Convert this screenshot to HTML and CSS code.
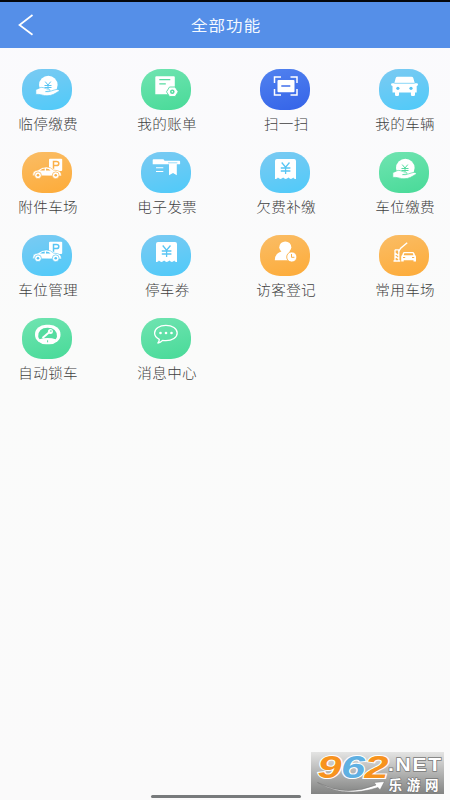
FILE: index.html
```
<!DOCTYPE html>
<html lang="zh-CN">
<head>
<meta charset="utf-8">
<title>全部功能</title>
<link rel="stylesheet" href="styles.css">
</head>
<body>
<svg class="defs" aria-hidden="true">
  <defs>
    <symbol id="hand" viewBox="0 0 50 41">
      <circle cx="26.3" cy="16" r="9.3" fill="#fff"/>
      <path d="M23.200 12.600l2.800 3.400 2.800-3.400M22.500 16.500h7M22.500 18.500h7M26 16v4" fill="none" stroke="currentColor" stroke-width="1"/>
      <path d="M13.8 20.4c2.5-.3 3.3-2 6-2 2.800 0 4.400 1.900 7.100 1.900 1.500 0 1.700 1.500.3 1.800l-3.700.5c3.500.9 8.300-1.900 11.300-2.200 2.500-.2 3.100 1 1.700 2-3.200 2.200-6.700 4.400-11.500 4.400-3.500 0-5.700-1.400-8.700-1.400h-2.500z" fill="#fff" stroke="currentColor" stroke-width=".7"/>
    </symbol>
    <symbol id="bill" viewBox="0 0 50 41">
      <path d="M15.300 7.300h17.500q1 0 1 1v17h-19.500v-17q0-1 1-1z" fill="#fff"/>
      <path d="M18.300 10.700h11M18.300 14.800h6.500" stroke="currentColor" stroke-width="1.300"/>
      <path d="M28.500 18h5.700l3 4.800-3 4.700h-5.700l-3-4.700z" fill="#fff" stroke="currentColor" stroke-width=".9" stroke-linejoin="round"/>
      <circle cx="31.300" cy="22.800" r="2.300" fill="currentColor"/><circle cx="31.300" cy="22.800" r=".8" fill="#fff"/>
    </symbol>
    <symbol id="scan" viewBox="0 0 50 41">
      <path d="M14.500 14V8h6.500M30.500 8H37v6M37 20v6h-6.500M21 26h-6.500v-6" fill="none" stroke="#fff" stroke-width="1.500"/>
      <rect x="17.500" y="11" width="17" height="12.300" rx="1" fill="#fff"/>
      <path d="M21.300 17h9" stroke="currentColor" stroke-width="1.500"/>
    </symbol>
    <symbol id="car" viewBox="0 0 50 41">
      <path d="M18.500 7.700h14q1.400 0 1.800 1.300l1.500 5.200h1.900q1.300 0 1.300 1.300t-1.300 1.400v6.500h-1.700v2.300q0 1.300-1.300 1.300h-1.500q-1.300 0-1.300-1.300v-2.300H20v2.300q0 1.300-1.300 1.300h-1.400Q16 27 16 25.700v-2.300h-2.500v-6.500Q12 16.700 12 15.500t1.500-1.300h1.800L16.700 9q.4-1.300 1.800-1.300z" fill="#fff"/>
      <path d="M15.300 14.300h20.400" stroke="currentColor" stroke-width=".7"/>
      <circle cx="18.900" cy="19.300" r="1.600" fill="currentColor"/><circle cx="32" cy="19.300" r="1.600" fill="currentColor"/>
    </symbol>
    <symbol id="parking" viewBox="0 0 50 41">
      <rect x="27" y="6.800" width="13.200" height="12.300" rx="1" fill="#fff"/>
      <path d="M31.500 16.700V9.400h3q2.300 0 2.300 2.100t-2.300 2.100h-3" fill="none" stroke="currentColor" stroke-width="1.500"/>
      <path d="M10.700 23.700q-.3-4 2.300-4.900l3.200-.9q3.700-3 8-3 4.500 0 7.300 3.200 5 .2 6.800 1.800 1.200 1.400 1 4.200z" fill="#fff" stroke="currentColor" stroke-width=".6"/>
      <path d="M18 18.400q2.300-1.700 4.700-1.800v1.800zM24 16.600q2.800.1 4.600 1.800h-4.600z" fill="currentColor"/>
      <g fill="#fff" stroke="currentColor" stroke-width=".7"><circle cx="16" cy="23.300" r="3.400"/><circle cx="33.700" cy="23.300" r="3.400"/></g>
      <g fill="currentColor"><circle cx="16" cy="23.300" r="1.300"/><circle cx="33.700" cy="23.300" r="1.300"/></g>
    </symbol>
    <symbol id="invoice" viewBox="0 0 50 41">
      <path d="M12.500 7.300h9.300q1.200 0 1.700 1.400h14.800q.8 0 .8.800v2.700H11.700V8.100q0-.8.800-.8z" fill="#fff"/>
      <path d="M28 12h7.800v11.200L32 21l-4 2.200z" fill="#fff"/>
      <path d="M15 15.700h7.300M15 19.500h7.300" stroke="#fff" stroke-width="1.100"/>
      <path d="M27 10.800h9.300" stroke="currentColor" stroke-width=".6"/>
    </symbol>
    <symbol id="receipt" viewBox="0 0 50 41">
      <path d="M17 6.900h17q2 0 2 2v18q-2.300.4-2.700-1.300-2.300 2.700-4.900 0-2.700 2.700-5.300 0-2.600 2.700-5.200 0-.7 1.700-2.900 1.300v-18q0-2 2-2z" fill="#fff"/>
      <path d="M21.700 10.500l3.900 4.700 3.900-4.700M20.800 16h9.600M20.800 19h9.600M25.600 15v7" fill="none" stroke="currentColor" stroke-width="1.300"/>
    </symbol>
    <symbol id="visitor" viewBox="0 0 50 41">
      <ellipse cx="25.300" cy="12.200" rx="6" ry="5.800" fill="#fff"/>
      <path d="M14.800 25.300q0-7.100 6.700-8.800h7.700q4 1.300 4.800 5l-3 3.800z" fill="#fff"/>
      <circle cx="31.800" cy="22" r="5.100" fill="#fff" stroke="currentColor" stroke-width=".9"/>
      <path d="M31.500 19v3.300h2.900" fill="none" stroke="currentColor" stroke-width="1"/>
    </symbol>
    <symbol id="barrier" viewBox="0 0 50 41">
      <path d="M14.500 26h6.800M16 25.800V14.800M16 14.800h3.800v11M16 18l4 3M16 21l4 3" stroke="#fff" stroke-width="1.300" fill="none"/>
      <path d="M19.700 16.500l2-3.300 6.500-5.400" fill="none" stroke="#fff" stroke-width="1.400"/>
      <path d="M25 17h9q1 0 1.500 1.500l.5 1.500q1 .6 1 2v4.500h-2.500v-1.300H24.700v1.300h-2.500V22q0-1.400 1-2l.5-1.500Q24 17 25 17z" fill="#fff"/>
      <path d="M25.300 18.200h8.500l.6 2h-9.700zM24 22h2.200v1H24zM33 22h2.200v1H33z" fill="currentColor"/>
    </symbol>
    <symbol id="lock" viewBox="0 0 50 41">
      <rect x="13" y="6.700" width="25.500" height="19.600" rx="11" ry="9.500" fill="#fff"/>
      <path d="M16.200 18.500q0-8.800 9.400-8.800t9.400 8.800q-.2 1.600-1.400 2.800-3.300-1.400-8-1.400t-8 1.400q-1.200-1.200-1.400-2.800z" fill="currentColor"/>
      <path d="M20.500 20l7-6" stroke="#fff" stroke-width="2"/>
      <circle cx="28.400" cy="13.500" r="2.500" fill="#fff"/><circle cx="28.900" cy="13.100" r=".8" fill="currentColor"/>
      <path d="M25.600 22.300v2" stroke="currentColor"/>
    </symbol>
    <symbol id="message" viewBox="0 0 50 41">
      <path d="M18.300 21.300q-4.700-2.200-4.700-6.300c0-4.500 5-7.700 11.300-7.700s11.300 3.200 11.300 7.700-5 7.700-11.300 7.700q-1.800 0-3.300-.3-2 2.200-4.700 2.600 1.500-1.700 1.400-3.700z" fill="none" stroke="#fff" stroke-width="1.300" stroke-linejoin="round"/>
      <g fill="#fff"><circle cx="19.500" cy="15" r="1.300"/><circle cx="25" cy="15" r="1.300"/><circle cx="30.500" cy="15" r="1.300"/></g>
    </symbol>
  </defs>
</svg>
<div class="screen">
  <header class="bar">
    <svg class="back" viewBox="0 0 16 22"><path d="M14.500 1L1.500 11l13 9.800" fill="none" stroke="#fff" stroke-width="1.700"/></svg>
    <h1 class="title">全部功能</h1>
  </header>
  <main class="grid">
    <div class="item"><svg class="icon sky"><use href="#hand"/></svg><span class="label">临停缴费</span></div>
    <div class="item"><svg class="icon green"><use href="#bill"/></svg><span class="label">我的账单</span></div>
    <div class="item"><svg class="icon blue"><use href="#scan"/></svg><span class="label">扫一扫</span></div>
    <div class="item"><svg class="icon sky"><use href="#car"/></svg><span class="label">我的车辆</span></div>
    <div class="item"><svg class="icon orange"><use href="#parking"/></svg><span class="label">附件车场</span></div>
    <div class="item"><svg class="icon sky"><use href="#invoice"/></svg><span class="label">电子发票</span></div>
    <div class="item"><svg class="icon sky"><use href="#receipt"/></svg><span class="label">欠费补缴</span></div>
    <div class="item"><svg class="icon green"><use href="#hand"/></svg><span class="label">车位缴费</span></div>
    <div class="item"><svg class="icon sky"><use href="#parking"/></svg><span class="label">车位管理</span></div>
    <div class="item"><svg class="icon sky"><use href="#receipt"/></svg><span class="label">停车券</span></div>
    <div class="item"><svg class="icon orange"><use href="#visitor"/></svg><span class="label">访客登记</span></div>
    <div class="item"><svg class="icon orange"><use href="#barrier"/></svg><span class="label">常用车场</span></div>
    <div class="item"><svg class="icon green"><use href="#lock"/></svg><span class="label">自动锁车</span></div>
    <div class="item"><svg class="icon green"><use href="#message"/></svg><span class="label">消息中心</span></div>
  </main>
  <div class="home"></div>
  <svg class="mark" viewBox="0 0 133 42">
    <path d="M6.500 30.500q28 15 58.500 2.500l-2-2.500 10.500-1-4.500 8.500-2-2.500Q33 46.500 6.500 30.500z" fill="#fff" stroke="#777" stroke-width=".5"/>
    <g class="digits">
      <text x="6.500" y="25.500" textLength="24" lengthAdjust="spacingAndGlyphs" fill="#f7931e">9</text>
      <text x="30" y="25.500" textLength="24" lengthAdjust="spacingAndGlyphs" fill="#5fb0e2">6</text>
      <text x="53.500" y="25.500" textLength="24" lengthAdjust="spacingAndGlyphs" fill="#f7931e">2</text>
    </g>
    <text class="net" x="77" y="19.300" textLength="55" lengthAdjust="spacingAndGlyphs">.NET</text>
    <text class="site" x="77.500" y="37.500" textLength="50">乐游网</text>
  </svg>
</div>
</body>
</html>
```
FILE: styles.css
```
* { box-sizing: border-box; }
body { margin: 0; background: #fafafa; font-family: "Noto Sans CJK SC", sans-serif; }
.defs { position: absolute; width: 0; height: 0; }
.screen {
  position: relative;
  width: 450px;
  height: 800px;
  overflow: hidden;
  border-top: 2px solid #05070b;
  background: linear-gradient(#fafafd, #fafbfa 45%, #fafafa);
}
.bar {
  display: grid;
  grid-template-columns: 48px 1fr 48px;
  align-items: center;
  height: 46px;
  background: #558fe8;
}
.back { width: 16px; height: 22px; margin-left: 18px; }
.title {
  margin: 0;
  padding: 0 0 0 2px;
  text-align: center;
  color: #f4f9ff;
  font-size: 15px;
  line-height: 22px;
  font-weight: 400;
  letter-spacing: 1px;
  transform: scaleX(1.1);
}
.grid {
  display: grid;
  grid-template-columns: repeat(4, 119px);
  grid-auto-rows: 83px;
  padding-top: 21px;
  margin-left: -12.5px;
}
.item { display: flex; flex-direction: column; align-items: center; }
.icon { width: 50px; height: 41px; flex: none; border-radius: 20px / 19px; }
.label {
  margin-top: 3px;
  padding-left: 1.5px;
  font-size: 13.5px;
  line-height: 20px;
  font-weight: 300;
  letter-spacing: .3px;
  color: #404040;
  white-space: nowrap;
  transform: scaleX(1.08);
}
.sky { color: #58c5f4; background: linear-gradient(165deg, #7bcaf2, #4fcaf9); }
.green { color: #55dca0; background: linear-gradient(165deg, #70e4b1, #48da98); }
.blue { color: #3f6eeb; background: linear-gradient(165deg, #5182ef, #3463e8); }
.orange { color: #fbb14a; background: linear-gradient(165deg, #fabd66, #fdab38); }
.home {
  position: absolute;
  left: 151px;
  bottom: 2px;
  width: 150px;
  height: 3px;
  border-radius: 2px;
  background: #777a7b;
}
.mark {
  position: absolute;
  left: 311px;
  top: 750px;
  width: 133px;
  height: 42px;
  overflow: visible;
  background: linear-gradient(#e4e4e3, #828382);
}
.digits {
  font: italic bold 32px "Liberation Sans", sans-serif;
  stroke: #fff;
  stroke-width: 2px;
  paint-order: stroke;
}
.net, .site { fill: #fff; stroke: #777; stroke-width: 1.3px; paint-order: stroke; }
.net { font: bold 18px "Liberation Sans", sans-serif; letter-spacing: 1.5px; }
.site { font: bold 13.5px "Noto Sans CJK SC", sans-serif; }
```
